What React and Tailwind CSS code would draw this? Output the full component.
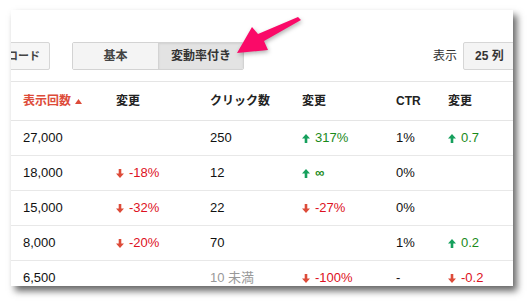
import React from 'react';

const jp = { fontFamily: '"Liberation Sans", "Noto Sans CJK JP", sans-serif' };

const Up = () => (
    <svg width="8" height="9" viewBox="0 0 8 9" className="shrink-0">
        <path d="M4 0 L8 4.5 L5.3 4.5 L5.3 9 L2.7 9 L2.7 4.5 L0 4.5 Z" fill="#16a05d" />
    </svg>
);

const Down = () => (
    <svg width="8" height="9" viewBox="0 0 8 9" className="shrink-0">
        <path d="M4 9 L8 4.5 L5.3 4.5 L5.3 0 L2.7 0 L2.7 4.5 L0 4.5 Z" fill="#dd4b39" />
    </svg>
);

const Change = ({ v }) => {
    if (!v) return <div />;
    const up = v.startsWith('+');
    return (
        <div className={`flex items-center gap-[5px] ${up ? 'text-[#1a8a1a]' : 'text-[#dd1122]'}`}>
            {up ? <Up /> : <Down />}
            <span className={v === '+∞' ? 'font-bold' : ''}>{up ? v.slice(1) : v}</span>
        </div>
    );
};

const rows = [
    { imp: '27,000', impC: '', clicks: '250', clickC: '+317%', ctr: '1%', ctrC: '+0.7' },
    { imp: '18,000', impC: '-18%', clicks: '12', clickC: '+∞', ctr: '0%', ctrC: '' },
    { imp: '15,000', impC: '-32%', clicks: '22', clickC: '-27%', ctr: '0%', ctrC: '' },
    { imp: '8,000', impC: '-20%', clicks: '70', clickC: '', ctr: '1%', ctrC: '+0.2' },
    { imp: '6,500', impC: '', clicks: '10 未満', clickC: '-100%', ctr: '-', ctrC: '-0.2', gray: true },
];

const cols = 'grid grid-cols-[93px_94px_92px_94px_52px_1fr] pl-[12px]';

export default function App() {
    return (
        <div className="w-[530px] h-[304px] bg-white pt-[10px] pl-[11px] relative" style={jp}>
            <div className="w-[502px] h-[276px] bg-white overflow-hidden shadow-[4px_5px_7px_rgba(0,0,0,0.6)]">
                {/* Toolbar */}
                <div className="flex items-center pt-[32px] pb-[11px] border-b border-[#e5e5e5]">
                    <button className="ml-[-20px] w-[59px] h-[28px] flex items-center justify-end pr-[9px] border border-[#d6d6d6] rounded-[2px] bg-[#f6f6f6] text-[11px] font-semibold text-[#444]">
                        ロード
                    </button>
                    <div className="ml-[22px] flex h-[28px] border border-[#d3d3d3] rounded-[2px] overflow-hidden">
                        <div className="w-[85px] flex items-center justify-center bg-[#f4f4f4] text-[12px] font-semibold text-[#444]">基本</div>
                        <div className="w-[85px] flex items-center justify-center bg-[#e3e3e3] border-l border-[#d3d3d3] shadow-[inset_0_1px_2px_rgba(0,0,0,0.08)] text-[12px] font-semibold text-[#333]">変動率付き</div>
                    </div>
                    <div className="flex-1" />
                    <span className="text-[12px] text-[#333] mr-[6px]">表示</span>
                    <button className="w-[62px] mr-[-12px] h-[28px] flex items-center pl-[11px] border border-[#d6d6d6] rounded-[2px] bg-[#f4f4f4] text-[12px] font-bold text-[#333]">
                        25 列
                    </button>
                </div>

                {/* Header */}
                <div className={`${cols} h-[39px] items-center border-b border-[#e5e5e5] text-[12px] font-bold text-[#222]`}>
                    <div className="flex items-center gap-[4px] text-[#dd4b39]">
                        <span>表示回数</span>
                        <svg width="7" height="5" viewBox="0 0 7 5"><path d="M3.5 0 L7 5 L0 5 Z" fill="#dd4b39" /></svg>
                    </div>
                    <div>変更</div>
                    <div>クリック数</div>
                    <div>変更</div>
                    <div>CTR</div>
                    <div>変更</div>
                </div>

                {/* Rows */}
                {rows.map((r, i) => (
                    <div key={i} className={`${cols} h-[35px] items-center border-b border-[#e8e8e8] text-[13px] text-[#111]`}>
                        <div>{r.imp}</div>
                        <Change v={r.impC} />
                        <div className={r.gray ? 'text-[#999]' : ''}>{r.clicks}</div>
                        <Change v={r.clickC} />
                        <div>{r.ctr}</div>
                        <Change v={r.ctrC} />
                    </div>
                ))}
            </div>

            {/* Callout arrow */}
            <svg className="absolute left-0 top-0 pointer-events-none" width="530" height="304" style={{ filter: 'drop-shadow(1px 2px 2px rgba(0,0,0,0.3))' }}>
                <polygon points="237,53 252,27 258,34 298,17 301,20 264,41 268,50" fill="#fa0a68" />
            </svg>
        </div>
    );
}
